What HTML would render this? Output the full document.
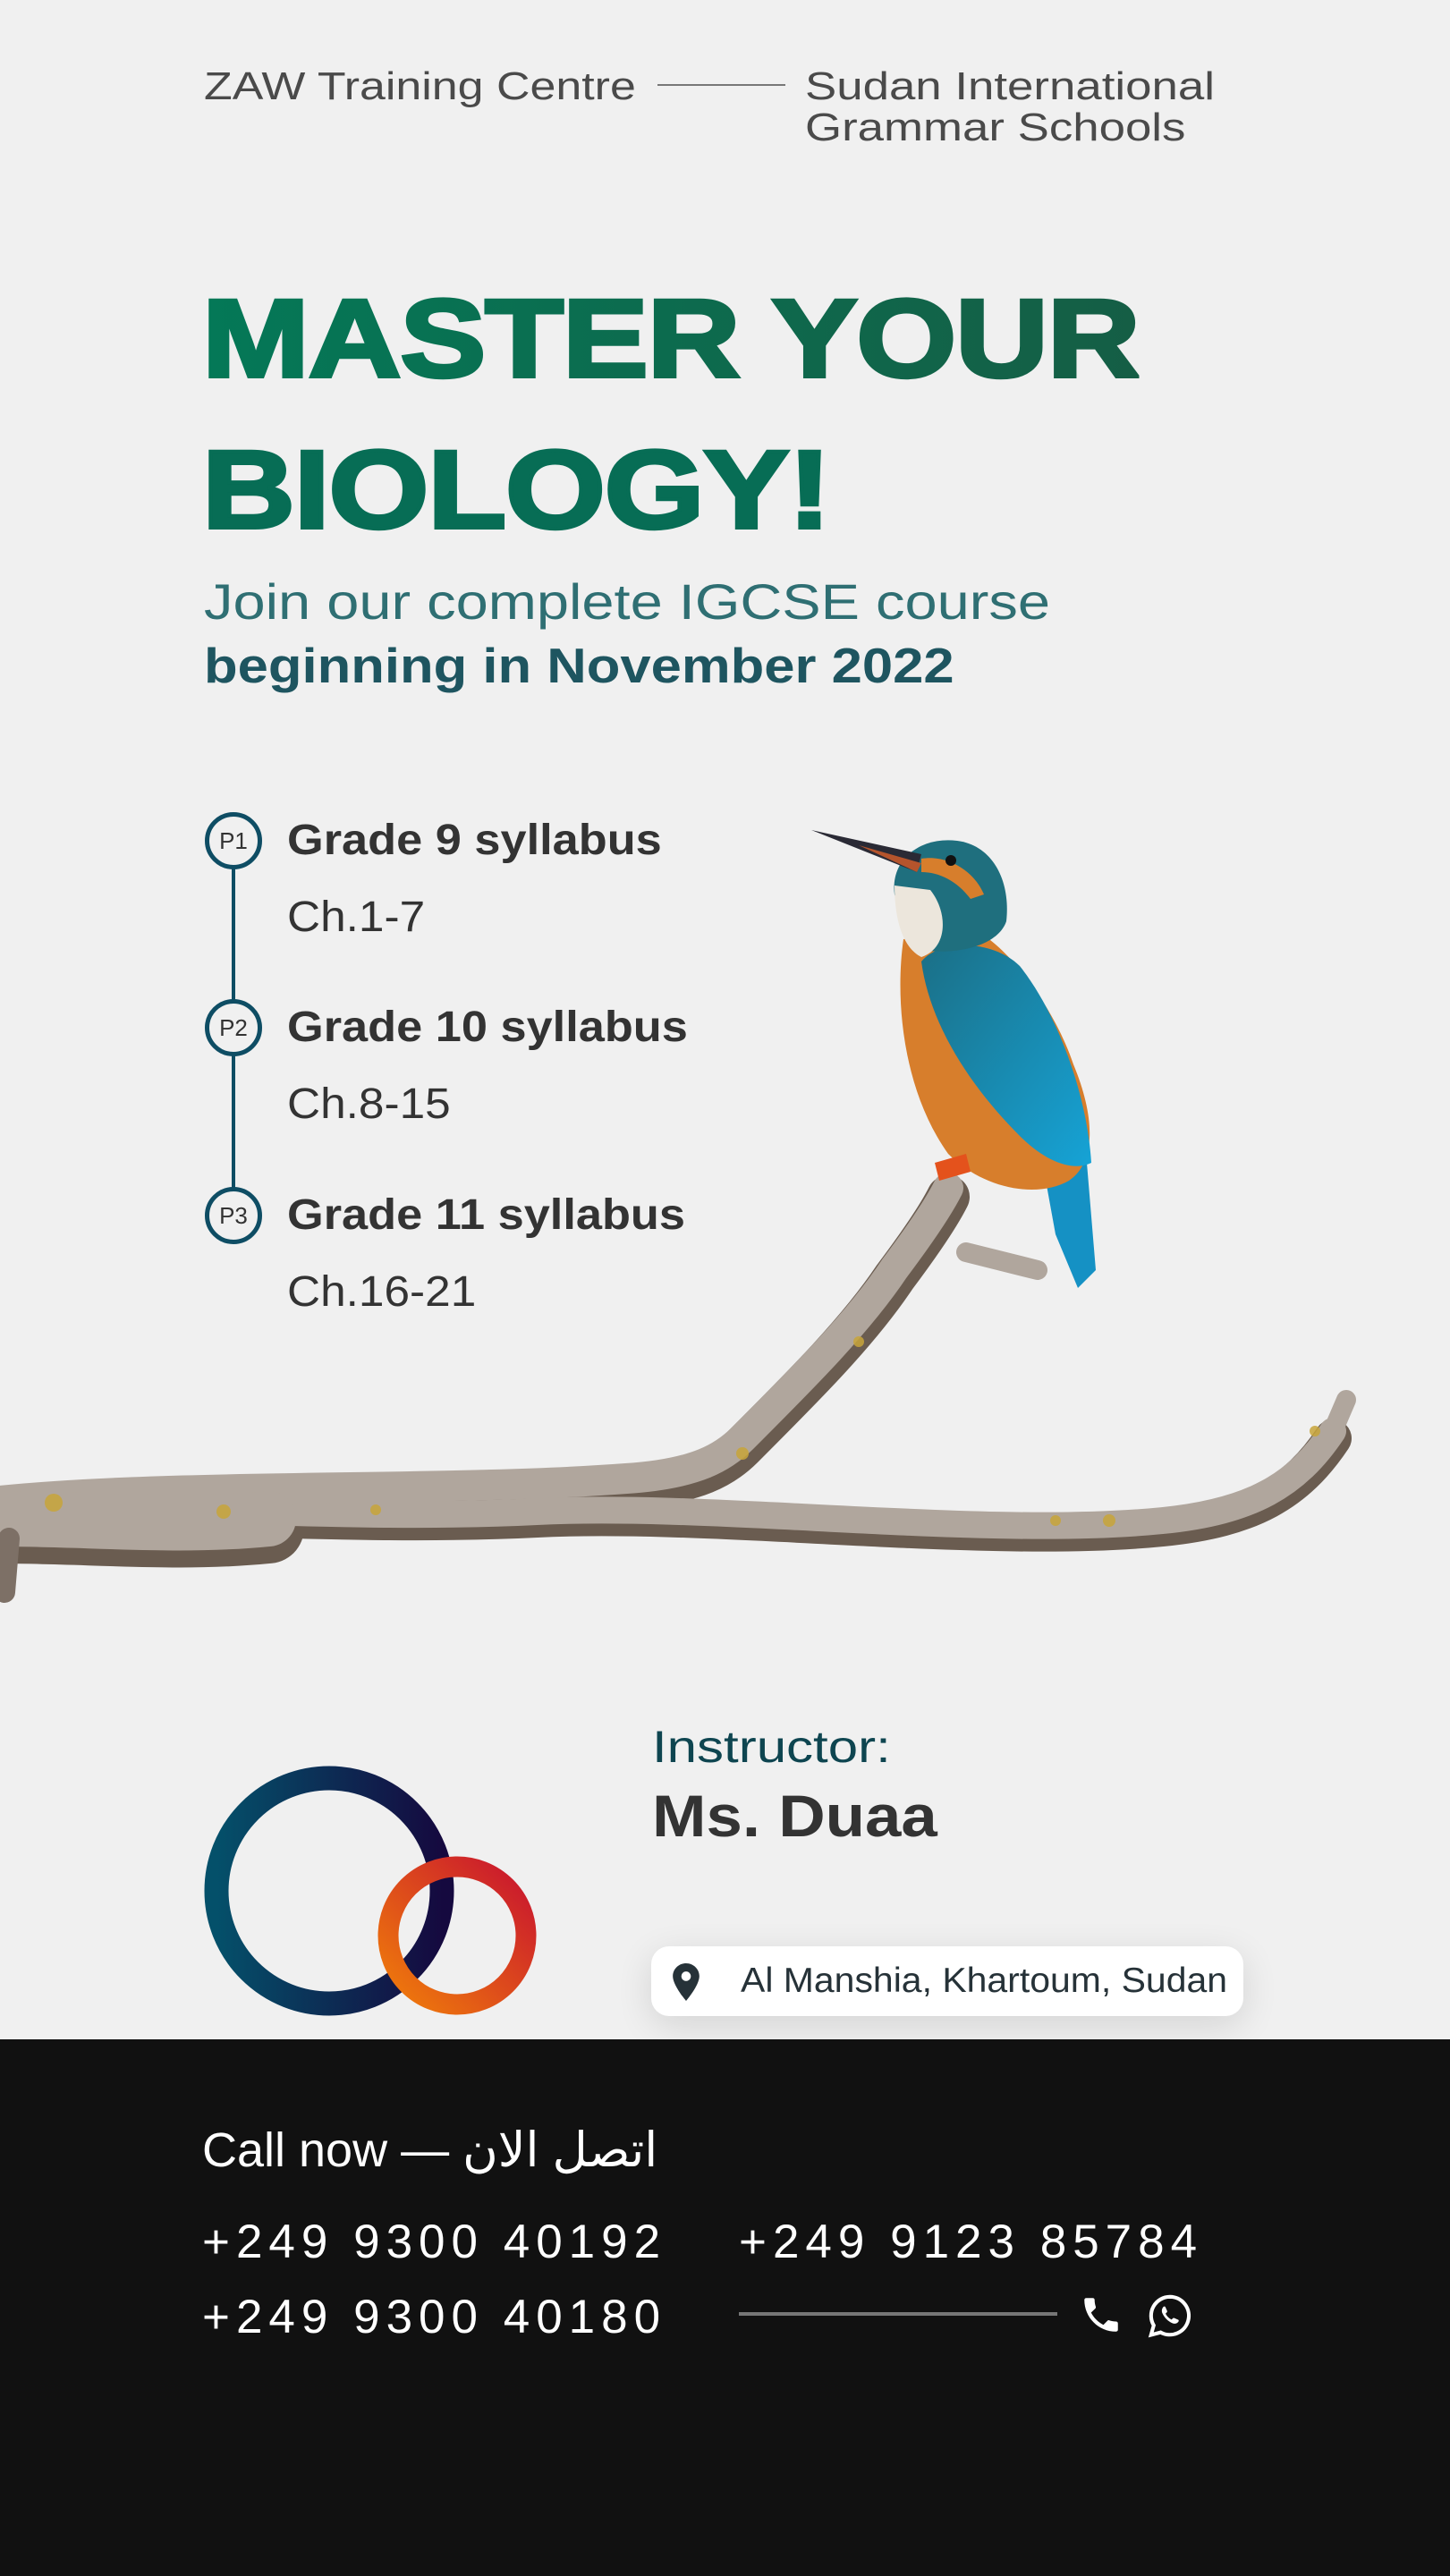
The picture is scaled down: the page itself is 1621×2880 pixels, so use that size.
<!DOCTYPE html>
<html><head><meta charset="utf-8"><style>
*{margin:0;padding:0;box-sizing:border-box}
html,body{width:1621px;height:2880px;background:#f0f0f0;overflow:hidden;font-family:"Liberation Sans",sans-serif}
.abs{position:absolute;white-space:nowrap;transform-origin:left top}
</style></head><body>
<div style="position:relative;width:1621px;height:2880px">

<div class="abs" style="left:228px;top:72px;font-size:44px;color:#4a4a4a;line-height:50px;transform:scaleX(1.18)">ZAW Training Centre</div>
<div class="abs" style="left:735px;top:94px;width:143px;height:2px;background:#777"></div>
<div class="abs" style="left:900px;top:74px;font-size:44px;color:#4a4a4a;line-height:46px;transform:scaleX(1.2)">Sudan International<br>Grammar Schools</div>

<div class="abs" style="left:226px;top:317px;font-size:124px;font-weight:900;line-height:124px;letter-spacing:-1px;color:#08725a;-webkit-text-stroke:4px #08725a;transform:scaleX(1.16)"><span style="background:linear-gradient(90deg,#047857,#155e45);-webkit-background-clip:text;color:transparent;-webkit-text-stroke:4px transparent">MASTER YOUR</span></div>
<div class="abs" style="left:226px;top:486px;font-size:124px;font-weight:900;line-height:124px;letter-spacing:-1px;color:#076d55;-webkit-text-stroke:4px #076d55;transform:scaleX(1.16)">BIOLOGY!</div>

<div class="abs" style="left:228px;top:640px;font-size:56px;line-height:66px;color:#2f6f73;transform:scaleX(1.16)">Join our complete IGCSE course</div>
<div class="abs" style="left:228px;top:711px;font-size:55px;line-height:66px;font-weight:bold;color:#1e5560;transform:scaleX(1.12)">beginning in November 2022</div>

<div class="abs" style="left:259px;top:970px;width:4px;height:360px;background:#0e4d64"></div>
<div class="abs" style="left:229px;top:908px;width:64px;height:64px;border:5px solid #0e4d64;border-radius:50%;background:#f0f0f0;font-size:26px;line-height:54px;text-align:center;color:#333">P1</div>
<div class="abs" style="left:229px;top:1117px;width:64px;height:64px;border:5px solid #0e4d64;border-radius:50%;background:#f0f0f0;font-size:26px;line-height:54px;text-align:center;color:#333">P2</div>
<div class="abs" style="left:229px;top:1327px;width:64px;height:64px;border:5px solid #0e4d64;border-radius:50%;background:#f0f0f0;font-size:26px;line-height:54px;text-align:center;color:#333">P3</div>
<div class="abs" style="left:321px;top:912px;font-size:48px;font-weight:bold;color:#333;line-height:56px;transform:scaleX(1.09)">Grade 9 syllabus</div>
<div class="abs" style="left:321px;top:998px;font-size:48px;color:#333;line-height:56px;transform:scaleX(1.07)">Ch.1-7</div>
<div class="abs" style="left:321px;top:1121px;font-size:48px;font-weight:bold;color:#333;line-height:56px;transform:scaleX(1.09)">Grade 10 syllabus</div>
<div class="abs" style="left:321px;top:1207px;font-size:48px;color:#333;line-height:56px;transform:scaleX(1.07)">Ch.8-15</div>
<div class="abs" style="left:321px;top:1331px;font-size:48px;font-weight:bold;color:#333;line-height:56px;transform:scaleX(1.09)">Grade 11 syllabus</div>
<div class="abs" style="left:321px;top:1417px;font-size:48px;color:#333;line-height:56px;transform:scaleX(1.07)">Ch.16-21</div>

<svg class="abs" style="left:0;top:880px" width="1621" height="940" viewBox="0 880 1621 940">
<defs>
<linearGradient id="wing" x1="0" y1="0" x2="1" y2="1"><stop offset="0" stop-color="#1b6f86"/><stop offset="1" stop-color="#16a3d6"/></linearGradient>
</defs>
<g fill="none" stroke-linecap="round">
<g stroke="#6a5c50">
<path d="M0 1695 C200 1690 400 1708 600 1698 C800 1688 1100 1728 1300 1708 C1400 1698 1450 1668 1490 1608" stroke-width="42"/>
<path d="M0 1688 C200 1668 500 1678 700 1663 C780 1658 810 1638 830 1618 C900 1548 960 1488 1000 1428 C1030 1388 1050 1358 1060 1338" stroke-width="48"/>
<path d="M0 1708 C100 1708 200 1718 300 1708" stroke-width="80"/>
</g>
<g stroke="#b0a69d">
<path d="M0 1687 C200 1682 400 1700 600 1690 C800 1680 1100 1720 1300 1700 C1400 1690 1450 1660 1490 1600" stroke-width="30"/>
<path d="M0 1678 C200 1658 500 1668 700 1653 C780 1648 810 1628 830 1608 C900 1538 960 1478 1000 1418 C1030 1378 1050 1348 1060 1328" stroke-width="34"/>
<path d="M0 1698 C100 1698 200 1708 300 1698" stroke-width="62"/>
<path d="M10 1720 L5 1780" stroke-width="24" stroke="#7d7066"/>
<path d="M1080 1400 L1160 1420" stroke-width="22"/>
<path d="M1490 1600 L1505 1565" stroke-width="22"/>
</g>
</g>
<g fill="#c8a53a" opacity="0.85">
<circle cx="60" cy="1680" r="10"/><circle cx="250" cy="1690" r="8"/><circle cx="830" cy="1625" r="7"/><circle cx="1240" cy="1700" r="7"/><circle cx="1470" cy="1600" r="6"/><circle cx="960" cy="1500" r="6"/><circle cx="1180" cy="1700" r="6"/><circle cx="420" cy="1688" r="6"/>
</g>
<path d="M1160 1270 L1215 1300 L1225 1420 L1205 1440 L1180 1380 Z" fill="#1591c4"/>
<path d="M1010 1050 C1000 1120 1010 1220 1060 1290 C1100 1330 1160 1340 1195 1320 C1225 1300 1225 1250 1200 1190 C1180 1130 1130 1060 1090 1040 Z" fill="#d77e2c"/>
<path d="M1030 1075 C1050 1050 1110 1050 1140 1080 C1180 1130 1215 1220 1220 1300 C1200 1310 1170 1300 1140 1270 C1090 1220 1040 1150 1030 1075 Z" fill="url(#wing)"/>
<path d="M1000 1000 C995 960 1030 935 1070 940 C1110 945 1130 985 1125 1030 C1115 1060 1060 1070 1020 1060 Z" fill="#1f6f7e"/>
<path d="M1000 990 C1000 1030 1010 1060 1030 1070 C1060 1060 1060 1020 1040 995 Z" fill="#ece6dc"/>
<path d="M1030 960 C1060 955 1090 975 1100 1000 L1085 1005 C1070 985 1050 975 1030 975 Z" fill="#d77e2c"/>
<circle cx="1063" cy="962" r="6" fill="#111"/>
<path d="M907 928 L1030 955 L1025 975 Z" fill="#2a2a35"/>
<path d="M960 945 L1030 965 L1025 975 Z" fill="#b5542c"/>
<path d="M1045 1300 L1080 1290 L1085 1310 L1050 1320 Z" fill="#e4521c"/>
</svg>

<svg class="abs" style="left:220px;top:1965px" width="390" height="300" viewBox="220 1965 390 300">
<defs>
<linearGradient id="g1" x1="0" x2="1"><stop offset="0" stop-color="#04506a"/><stop offset="1" stop-color="#15093f"/></linearGradient>
<linearGradient id="g2" x1="0" y1="1" x2="1" y2="0"><stop offset="0" stop-color="#f07d0a"/><stop offset="1" stop-color="#c8142f"/></linearGradient>
</defs>
<ellipse cx="368" cy="2114" rx="126" ry="126" fill="none" stroke="url(#g1)" stroke-width="27"/>
<ellipse cx="511" cy="2164" rx="77" ry="77" fill="none" stroke="url(#g2)" stroke-width="23"/>
</svg>

<div class="abs" style="left:729px;top:1925px;font-size:50px;color:#0e4550;line-height:56px;transform:scaleX(1.2)">Instructor:</div>
<div class="abs" style="left:729px;top:1995px;font-size:66px;font-weight:bold;color:#333;line-height:70px;transform:scaleX(1.1)">Ms. Duaa</div>

<div class="abs" style="left:728px;top:2176px;width:662px;height:78px;background:#fff;border-radius:20px;box-shadow:0 10px 40px rgba(0,0,0,0.12)">
<svg style="position:absolute;left:24px;top:19px" width="30" height="42" viewBox="0 0 24 34"><path d="M12 0C5.4 0 0 5.2 0 11.6 0 20 12 34 12 34s12-14 12-22.4C24 5.2 18.6 0 12 0zm0 16a4.3 4.3 0 110-8.6 4.3 4.3 0 010 8.6z" fill="#263238"/></svg>
<div style="position:absolute;left:100px;top:0;line-height:78px;font-size:39px;color:#263238;transform:scaleX(1.05);transform-origin:left">Al Manshia, Khartoum, Sudan</div>
</div>

<div class="abs" style="left:0;top:2280px;width:1621px;height:600px;background:#111"></div>
<div class="abs" style="left:226px;top:2372px;font-size:54px;color:#fff;line-height:64px;font-family:'Liberation Sans','DejaVu Sans',sans-serif">Call now — اتصل الان</div>
<div class="abs" style="left:226px;top:2477px;font-size:53px;color:#fff;line-height:60px;letter-spacing:7px">+249 9300 40192</div>
<div class="abs" style="left:226px;top:2561px;font-size:53px;color:#fff;line-height:60px;letter-spacing:7px">+249 9300 40180</div>
<div class="abs" style="left:826px;top:2477px;font-size:53px;color:#fff;line-height:60px;letter-spacing:7px">+249 9123 85784</div>
<div class="abs" style="left:826px;top:2585px;width:356px;height:4px;background:#777"></div>
<svg class="abs" style="left:1206px;top:2563px" width="50" height="50" viewBox="0 0 24 24"><path d="M6.6 10.8c1.4 2.8 3.8 5.1 6.6 6.6l2.2-2.2c.3-.3.7-.4 1-.2 1.1.4 2.3.6 3.6.6.6 0 1 .4 1 1V20c0 .6-.4 1-1 1C10.6 21 3 13.4 3 4c0-.6.4-1 1-1h3.5c.6 0 1 .4 1 1 0 1.3.2 2.5.6 3.6.1.3 0 .7-.2 1L6.6 10.8z" fill="#fff"/></svg>
<svg class="abs" style="left:1282px;top:2563px" width="52" height="52" viewBox="0 0 24 24"><path d="M12 2.2A9.8 9.8 0 003.6 17l-1.4 4.9 5-1.3A9.8 9.8 0 1012 2.2z" fill="none" stroke="#fff" stroke-width="1.9"/><path d="M8.6 7.4c.3-.3.8-.3 1 .1l.9 2c.1.3 0 .6-.2.8l-.6.6c.6 1.3 1.8 2.5 3.1 3.1l.6-.6c.2-.2.5-.3.8-.2l2 .9c.4.2.4.7.1 1-.8 1-1.900 1.3-3.2.7-2.2-1-4-2.8-5-5-.6-1.3-.3-2.4.5-3.4z" fill="#fff"/></svg>

</div>
</body></html>
